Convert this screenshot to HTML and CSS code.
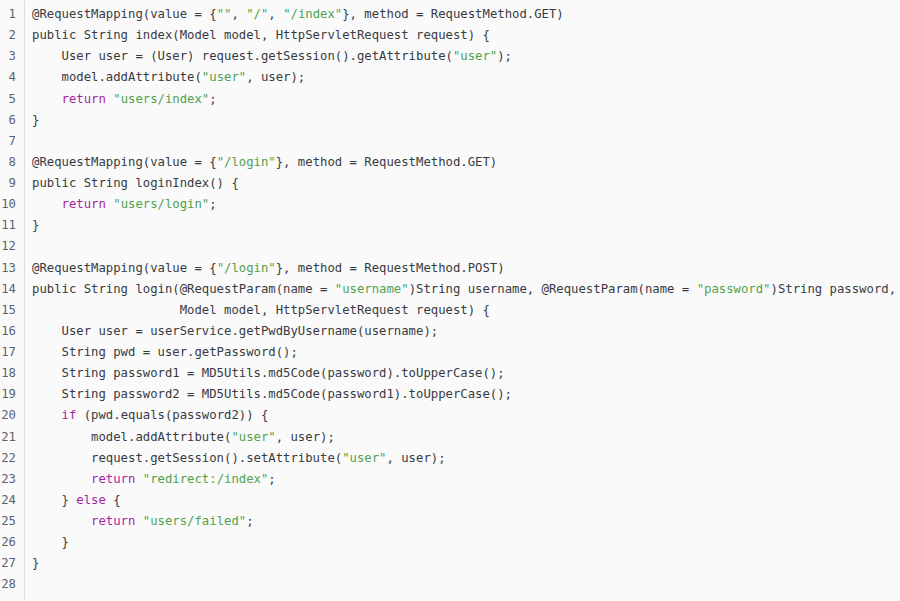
FILE: index.html
```html
<!DOCTYPE html>
<html>
<head>
<meta charset="utf-8">
<link rel="stylesheet" href="styles.css">
</head>
<body>
<div class="block">
<div class="gutter">
<div>1</div><div>2</div><div>3</div><div>4</div><div>5</div><div>6</div><div>7</div><div>8</div><div>9</div><div>10</div><div>11</div><div>12</div><div>13</div><div>14</div><div>15</div><div>16</div><div>17</div><div>18</div><div>19</div><div>20</div><div>21</div><div>22</div><div>23</div><div>24</div><div>25</div><div>26</div><div>27</div><div>28</div>
</div>
<pre class="code"><div>@RequestMapping(value = {<span class="s">""</span>, <span class="s">"/"</span>, <span class="s">"/index"</span>}, method = RequestMethod.GET)</div><div>public String index(Model model, HttpServletRequest request) {</div><div>    User user = (User) request.getSession().getAttribute(<span class="s">"user"</span>);</div><div>    model.addAttribute(<span class="s">"user"</span>, user);</div><div>    <span class="k">return</span> <span class="s">"users/index"</span>;</div><div>}</div><div> </div><div>@RequestMapping(value = {<span class="s">"/login"</span>}, method = RequestMethod.GET)</div><div>public String loginIndex() {</div><div>    <span class="k">return</span> <span class="s">"users/login"</span>;</div><div>}</div><div> </div><div>@RequestMapping(value = {<span class="s">"/login"</span>}, method = RequestMethod.POST)</div><div>public String login(@RequestParam(name = <span class="s">"username"</span>)String username, @RequestParam(name = <span class="s">"password"</span>)String password,</div><div>                    Model model, HttpServletRequest request) {</div><div>    User user = userService.getPwdByUsername(username);</div><div>    String pwd = user.getPassword();</div><div>    String password1 = MD5Utils.md5Code(password).toUpperCase();</div><div>    String password2 = MD5Utils.md5Code(password1).toUpperCase();</div><div>    <span class="k">if</span> (pwd.equals(password2)) {</div><div>        model.addAttribute(<span class="s">"user"</span>, user);</div><div>        request.getSession().setAttribute(<span class="s">"user"</span>, user);</div><div>        <span class="k">return</span> <span class="s">"redirect:/index"</span>;</div><div>    } <span class="k">else</span> {</div><div>        <span class="k">return</span> <span class="s">"users/failed"</span>;</div><div>    }</div><div>}</div><div> </div></pre>
</div>
</body>
</html>
```
FILE: styles.css
```css
html, body {
  margin: 0;
  padding: 0;
  background: #fafafa;
}
body {
  width: 900px;
  height: 601px;
  overflow: hidden;
}
.block {
  display: flex;
  background: #fafafa;
  font-family: "DejaVu Sans Mono", "Liberation Mono", monospace;
  font-size: 12.28px;
  line-height: 21.12px;
  color: #383a42;
}
.gutter {
  width: 25px;
  box-sizing: border-box;
  padding: 4px 8px 4px 0;
  text-align: right;
  color: #5c6370;
  border-right: 1px solid #dcdcdc;
  flex: none;
}
.code {
  margin: 0;
  padding: 4px 0 4px 7px;
  font: inherit;
  white-space: pre;
  overflow: hidden;
}
.k { color: #a626a4; }
.s { color: #50a14f; }
```
